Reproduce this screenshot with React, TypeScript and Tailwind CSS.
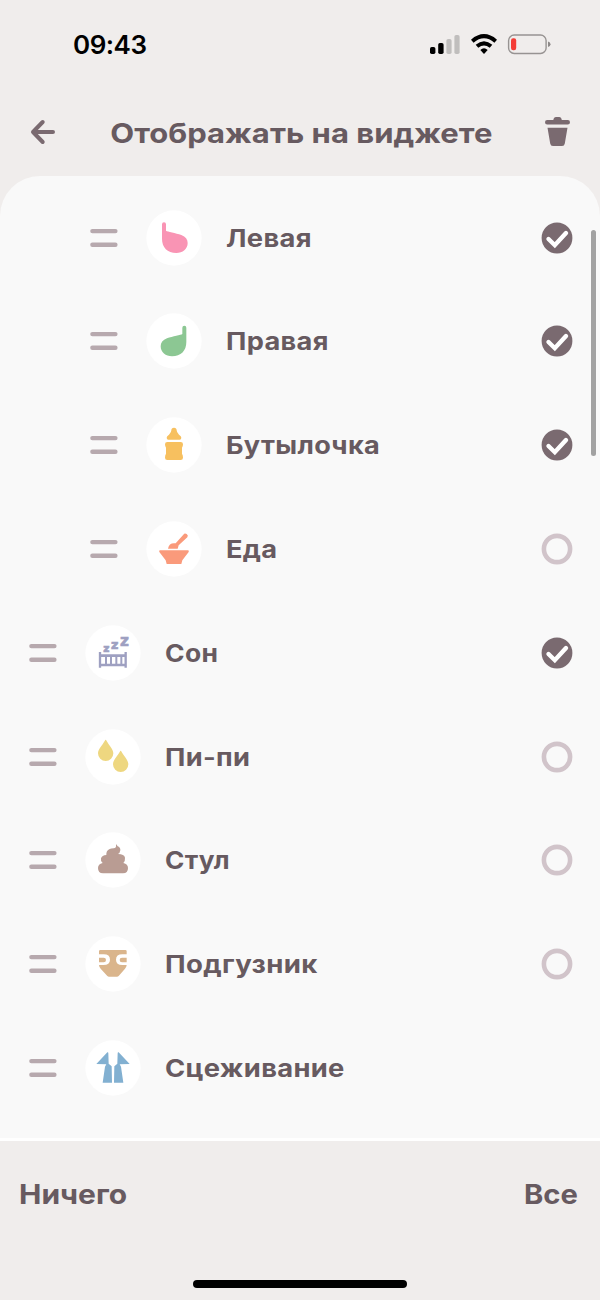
import type { ReactNode } from "react";

function Badge({ children }: { children: ReactNode }) {
  return (
    <svg className="size-14 shrink-0" viewBox="-84 -84 168 168">
      <circle r="83" fill="#ffffff" />
      {children}
    </svg>
  );
}

const breast = "M-36-41a6 6 0 0 1 12 0V-22C-20-19 5-15 22-9C35-4 41 4 41 15C41 33 26 45 7 45C-20 45-36 28-36 2Z";
const robe = "M-50-12L-17-47Q-14-48-14-44L-13-13L-4-5L-3 44H-31L-24-4L-20-11Z";
const drop = "M-22-52Q-21-52-19-48C-12-35 1-24 1-11A23 23 0 0 1-45-11C-45-24-32-35-25-48Q-23-52-22-52Z";

const icons: Record<string, ReactNode> = {
  left: <path d={breast} fill="#f994b4" />,
  right: <path d={breast} fill="#8cc793" transform="translate(1 1) scale(-1 1)" />,
  bottle: (
    <g fill="#f7c05f">
      <path d="M-8-44a8 8 0 0 1 16 0Q8-37 15-31Q22-27 22-22Q22-16 17-16H-17Q-22-16-22-22Q-22-27-15-31Q-8-37-8-44Z" />
      <path d="M-20-9H20Q27-9 27-2Q27 4 24 8V26Q27 31 27 38Q27 45 20 45H-20Q-27 45-27 38Q-27 31-24 26V8Q-27 4-27-2Q-27-9-20-9Z" />
    </g>
  ),
  food: (
    <g fill="#fa9a7b">
      <path d="M-42 4H42Q46 4 44 9L25 34L22 45H-22L-25 34L-44 9Q-46 4-42 4Z" />
      <path d="M-18-1Q-15-17 0-17H5L28-43A6.5 6.5 0 0 1 40-35L14-11L11-1Z" />
    </g>
  ),
  sleep: (
    <g fill="none" stroke="#9ea0c1">
      <path d="M-39-3V44M38-3V44" strokeWidth="7" />
      <path d="M-39 8H38M-39 36H38" strokeWidth="8" />
      <path d="M-21 8V36M-6 8V36M10 8V36M25 8V36" strokeWidth="6" />
      <g fill="#9ea0c1" strokeWidth="2" className="font-['DejaVu_Sans'] font-bold">
        <text x="-29" y="-4" fontSize="32">z</text>
        <text x="-6" y="-12" fontSize="38">z</text>
        <text x="21" y="-21" fontSize="46">z</text>
      </g>
    </g>
  ),
  pee: (
    <g fill="#eed780">
      <path d={drop} />
      <path d={drop} transform="translate(45 33)" />
    </g>
  ),
  poop: (
    <path
      fill="#b99c93"
      d="M9-46Q12-47 13-42Q23-38 22-29Q21-21 15-18Q34-18 36-7Q37 3 31 9Q45 12 45 24Q45 40 30 40H-30Q-45 40-45 24Q-45 12-31 9Q-38 4-36-5Q-33-14-20-15Q-21-28-10-33Q-6-35 2-35Q11-36 9-46Z"
    />
  ),
  diaper: (
    <g fill="#dab58c">
      <path d="M-38-42H37Q41-42 41-38V-29H28Q9-29 9-13Q9 3 28 3H41Q41 8 36 14L17 36Q15 38 12 38H-12Q-15 38-17 36L-37 14Q-42 8-42 3H-29Q-9 3-9-13Q-9-29-28-29H-42V-38Q-42-42-38-42Z" />
      <path d="M-42-19H-28a7 7 0 0 1 0 14H-42ZM41-19H27a7 7 0 0 0 0 14H41Z" />
    </g>
  ),
  pump: (
    <g fill="#82b0d1">
      <path d={robe} />
      <path d={robe} transform="scale(-1 1)" />
    </g>
  ),
};

type Row = { icon: string; label: string; stretch: string; nested?: boolean; checked?: boolean };

const rows: Row[] = [
  { icon: "left", label: "Левая", stretch: "scale-x-[1.115]", nested: true, checked: true },
  { icon: "right", label: "Правая", stretch: "scale-x-[1.11]", nested: true, checked: true },
  { icon: "bottle", label: "Бутылочка", stretch: "scale-x-[1.105]", nested: true, checked: true },
  { icon: "food", label: "Еда", stretch: "scale-x-[1.11]", nested: true, checked: false },
  { icon: "sleep", label: "Сон", stretch: "scale-x-[1.08]", checked: true },
  { icon: "pee", label: "Пи-пи", stretch: "scale-x-[1.11]", checked: false },
  { icon: "poop", label: "Стул", stretch: "scale-x-[1.07]", checked: false },
  { icon: "diaper", label: "Подгузник", stretch: "scale-x-[1.125]", checked: false },
  { icon: "pump", label: "Сцеживание", stretch: "scale-x-[1.115]" },
];

function Check({ checked }: { checked: boolean }) {
  return (
    <svg className="ml-auto size-8 shrink-0" viewBox="0 0 32 32">
      {checked ? (
        <>
          <circle cx="16" cy="16" r="15.4" fill="#7a6a70" />
          <path d="M7.5 17l6.3 6.2L25 11" fill="none" stroke="#fff" strokeWidth="4.4" strokeLinecap="round" />
        </>
      ) : (
        <circle cx="16" cy="16" r="13.1" fill="none" stroke="#d1c4ca" strokeWidth="4.6" />
      )}
    </svg>
  );
}

function ListRow({ row }: { row: Row }) {
  return (
    <li className={`flex h-[103.8px] items-center pr-[27px] ${row.nested ? "pl-[90px]" : "pl-[29px]"}`}>
      <svg className="h-5 w-7 shrink-0" viewBox="0 0 28 20" stroke="#b7a9ae" strokeWidth="4.4" strokeLinecap="round">
        <path d="M2.4 3.1H25.4M2.4 16.8H25.4" />
      </svg>
      <span className="ml-7 flex">
        <Badge>{icons[row.icon]}</Badge>
      </span>
      <span className={`ml-6 origin-left text-[24.5px] leading-8 font-bold tracking-[0.3px] whitespace-nowrap ${row.stretch}`}>
        {row.label}
      </span>
      {row.checked !== undefined && <Check checked={row.checked} />}
    </li>
  );
}

export default function App() {
  return (
    <div className="flex h-[1300px] w-[600px] flex-col overflow-hidden bg-[#f0edec] font-['Inter',sans-serif] text-[#675a60]">
      <div className="flex h-[88px] shrink-0 items-center pr-[49px] pl-[73px] text-black">
        <span className="pt-0.5 text-[26px] leading-8 font-semibold tracking-[-0.5px]">09:43</span>
        <svg className="ml-auto h-6 w-[122px]" viewBox="0 0 122 24">
          <g>
            <rect x="1" y="15" width="5.4" height="7" rx="1.7" />
            <rect x="9.2" y="11" width="5.4" height="11" rx="1.7" />
            <rect x="17.4" y="7" width="5.2" height="15" rx="1.7" fill="#c0bebd" />
            <rect x="25.4" y="3" width="5.2" height="19" rx="1.7" fill="#c0bebd" />
          </g>
          <g fill="none" stroke="#000" strokeWidth="4">
            <path d="M43.3 9.2Q55 -.8 66.7 9.2" />
            <path d="M48 14.3Q55 8.3 62 14.3" />
          </g>
          <path d="M51.3 18Q55 14.4 58.7 18L55 21.9Z" />
          <rect x="79.6" y="3" width="37.5" height="18.5" rx="5.6" fill="none" stroke="#979392" strokeWidth="1.4" />
          <rect x="82" y="6.3" width="5.2" height="12" rx="2.2" fill="#f43c36" />
          <path d="M119 9.5Q121.5 10.2 121.5 12.2Q121.5 14.4 119 15Z" fill="#8d8988" />
        </svg>
      </div>
      <header className="flex h-[88px] shrink-0 items-center justify-between pr-[30px] pl-[30px]">
        <svg className="size-7" viewBox="0 0 28 28" fill="none" stroke="#7a6a70" strokeWidth="4" strokeLinecap="round" strokeLinejoin="round">
          <path d="M23 14H3M12.7 4L3 14l9.7 10" />
        </svg>
        <h1 className="scale-x-[1.128] pt-0.5 text-[27.5px] leading-9 font-bold whitespace-nowrap">Отображать на виджете</h1>
        <svg className="h-8 w-[25px]" viewBox="0 0 25 32" fill="#7a6a70">
          <path d="M2.2 4H8.3Q8.8 1 11 1H14.2Q16.3 1 16.8 4H22.8a2.2 2.2 0 0 1 0 4.4H2.2A2.2 2.2 0 0 1 2.2 4Z" />
          <path d="M2.5 11.7H22.5L19.8 27.5Q19.4 30 17 30H8Q5.6 30 5.2 27.5Z" />
        </svg>
      </header>
      <main className="relative h-[962px] shrink-0 overflow-hidden rounded-t-[40px] bg-[#f9f9f9] pt-[9.8px]">
        <ul>
          {rows.map((row) => (
            <ListRow key={row.label} row={row} />
          ))}
        </ul>
        <div className="absolute top-[54px] right-[4.5px] h-[226px] w-[4.6px] rounded-full bg-[#a2a2a2]" />
      </main>
      <footer className="flex flex-1 flex-col items-center border-t-[3px] border-white">
        <div className="flex h-[108px] w-full items-center justify-between pr-[22px] pl-[19px] text-[27px] leading-9 font-bold">
          <button className="origin-left scale-x-[1.11]">Ничего</button>
          <button className="origin-right scale-x-[1.08]">Все</button>
        </div>
        <div className="mt-auto mb-3 h-2 w-[214px] rounded-full bg-black" />
      </footer>
    </div>
  );
}
